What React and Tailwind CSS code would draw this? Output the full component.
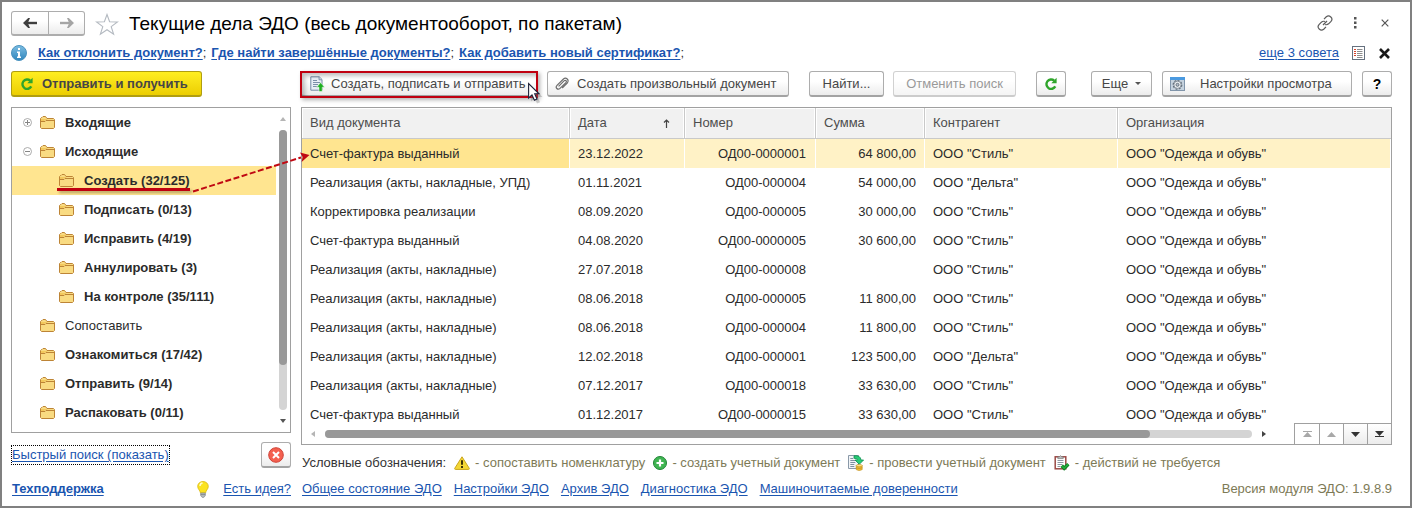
import React from "react";

const BTN =
  "flex h-[26px] items-center rounded-[3px] border border-[#adadad] border-b-2 border-b-[#a3a3a3] bg-linear-to-b from-white from-40% to-[#ececec] text-[#464646] whitespace-nowrap";
const LINK = "text-[#1a55b0] underline underline-offset-2 whitespace-nowrap";

const tree = [
  { label: "Входящие", bold: true, toggle: "plus" },
  {
    label: "Исходящие",
    bold: true,
    toggle: "minus",
    children: [
      { label: "Создать (32/125)", bold: true, selected: true },
      { label: "Подписать (0/13)", bold: true },
      { label: "Исправить (4/19)", bold: true },
      { label: "Аннулировать (3)", bold: true },
      { label: "На контроле (35/111)", bold: true },
    ],
  },
  { label: "Сопоставить" },
  { label: "Ознакомиться (17/42)", bold: true },
  { label: "Отправить (9/14)", bold: true },
  { label: "Распаковать (0/11)", bold: true },
];

const rows = [
  ["Счет-фактура выданный", "23.12.2022", "ОД00-0000001", "64 800,00", 'ООО "Стиль"'],
  ["Реализация (акты, накладные, УПД)", "01.11.2021", "ОД00-000004", "54 000,00", 'ООО "Дельта"'],
  ["Корректировка реализации", "08.09.2020", "ОД00-000005", "30 000,00", 'ООО "Стиль"'],
  ["Счет-фактура выданный", "04.08.2020", "ОД00-0000005", "30 600,00", 'ООО "Стиль"'],
  ["Реализация (акты, накладные)", "27.07.2018", "ОД00-000008", "", 'ООО "Стиль"'],
  ["Реализация (акты, накладные)", "08.06.2018", "ОД00-000005", "11 800,00", 'ООО "Стиль"'],
  ["Реализация (акты, накладные)", "08.06.2018", "ОД00-000004", "11 800,00", 'ООО "Стиль"'],
  ["Реализация (акты, накладные)", "12.02.2018", "ОД00-000001", "123 500,00", 'ООО "Дельта"'],
  ["Реализация (акты, накладные)", "07.12.2017", "ОД00-000018", "33 630,00", 'ООО "Стиль"'],
  ["Счет-фактура выданный", "01.12.2017", "ОД00-0000015", "33 630,00", 'ООО "Стиль"'],
];

function ArrowIcon({ flip, color }) {
  return (
    <svg width="14" height="10" viewBox="0 0 14 10" className={flip ? "rotate-180" : ""}>
      <path d="M3 5h11" stroke={color} strokeWidth="2.400" />
      <path d="M0 5L5.200 0H7L4.800 5L7 10H5.200z" fill={color} />
    </svg>
  );
}

function StarIcon() {
  return (
    <svg width="24" height="23" viewBox="0 0 24 23">
      <path
        d="M12 1.5l2.600 7.200 7.900.2-6.300 4.700 2.400 7.600L12 16.700l-6.600 4.500 2.400-7.600L1.500 8.900l7.900-.2z"
        fill="#fff"
        stroke="#b3b9c0"
        strokeWidth="1.100"
      />
    </svg>
  );
}

function InfoIcon() {
  return (
    <svg width="16" height="16" viewBox="0 0 16 16">
      <defs>
        <linearGradient id="info" x1="0" y1="0" x2="0" y2="1">
          <stop offset="0" stopColor="#7dbde2" />
          <stop offset="1" stopColor="#2f86bd" />
        </linearGradient>
      </defs>
      <circle cx="8" cy="8" r="7.500" fill="url(#info)" stroke="#4b93bf" strokeWidth="1" />
      <path d="M7 3h2v2H7zM6 6.500h3v5h1V13H6v-1.500h1V8H6z" fill="#fff" />
    </svg>
  );
}

function RefreshIcon() {
  return (
    <svg width="14" height="14" viewBox="0 0 14 14">
      <path d="M10.200 3.600A4.700 4.700 0 1 0 11.300 9.400" fill="none" stroke="#2fa52b" strokeWidth="2.400" />
      <path d="M12.600 0.800V6.200H7.300z" fill="#2fa52b" />
    </svg>
  );
}

function FolderIcon() {
  return (
    <svg width="15" height="13" viewBox="0 0 15 13">
      <path
        d="M.5 11.500V2.500L1.500 1.500H2L3 .5H5.500L7 2.500H13.500L14.500 3.500V11.500L13.500 12.500H1.500z"
        fill="#f9db82"
        stroke="#bd8436"
      />
      <path d="M1 5.500H5L6 4.500H14" fill="none" stroke="#bd8436" />
      <path d="M1 3h6l.5 1H5L4 5H1z" fill="#f2c75c" />
    </svg>
  );
}

function ToggleIcon({ kind }) {
  return (
    <svg width="9" height="9" viewBox="0 0 9 9">
      <circle cx="4.500" cy="4.500" r="4" fill="#fff" stroke="#a0a0a0" strokeWidth=".9" />
      <path d={kind === "plus" ? "M2 4.500h5M4.500 2v5" : "M2 4.500h5"} stroke="#858585" />
    </svg>
  );
}

function DocUpIcon() {
  return (
    <svg width="15" height="16" viewBox="0 0 15 16">
      <path d="M.8.8H9.200L12 3.500V14.200H.8z" fill="#e9eff6" stroke="#7389a4" />
      <path d="M9 .8V3.800H12" fill="#cfd9e4" stroke="#7389a4" strokeWidth=".8" />
      <path d="M3 4.500h4M3 6.500h7M3 8.500h5M3 10.500h4" stroke="#7d90a9" />
      <path d="M10.600 6.600L14.600 11.200H12.200V15.500H9V11.200H6.600z" fill="#1fae22" stroke="#fff" strokeWidth=".5" />
    </svg>
  );
}

function ClipIcon() {
  return (
    <svg width="14" height="14" viewBox="0 0 14 14">
      <path
        d="M3.600 9.300L9 3.900Q10.200 2.900 11 3.700T10.900 5.700L5 11.400Q3.200 12.900 1.800 11.500T2 8.300L8.200 2.200Q10.400.3 12.200 2T12.200 6.100L7.200 11"
        fill="none"
        stroke="#6c6c6c"
        strokeWidth="1.200"
      />
    </svg>
  );
}

function SettingsIcon() {
  return (
    <svg width="15" height="14" viewBox="0 0 15 14">
      <rect x=".5" y=".5" width="14" height="13" fill="#c5d2de" stroke="#8195aa" />
      <rect x="0" y="0" width="15" height="3" fill="#4b9ae0" />
      <circle cx="7.500" cy="7.800" r="4.300" fill="none" stroke="#5e6a76" strokeWidth="1.200" strokeDasharray="2 1.300" />
      <circle cx="7.500" cy="7.800" r="3.600" fill="#edf0f3" stroke="#77828d" strokeWidth=".8" />
      <circle cx="7.500" cy="7.800" r="1.500" fill="#b5bfca" stroke="#5e6a76" strokeWidth=".9" />
    </svg>
  );
}

function ChainIcon() {
  return (
    <svg width="16" height="16" viewBox="0 0 16 16" fill="none" stroke="#5c5c5c" strokeWidth="1.200">
      <path d="M7 4.200L9.300 1.800Q11.600 0 13.800 2T14 6.400L11.600 8.800Q10 10.200 8 9.500" />
      <path d="M9 11.800L6.700 14.200Q4.400 16 2.200 14T2 9.600L4.400 7.200Q6 5.800 8 6.500" />
      <path d="M6 10L10 6" />
    </svg>
  );
}

function ListIcon() {
  return (
    <svg width="13" height="14" viewBox="0 0 13 14">
      <rect x=".5" y=".5" width="12" height="13" fill="#fff" stroke="#66717f" />
      <path d="M2 3.500h2M2 5.500h2M2 7.500h2M2 9.500h2" stroke="#d8432c" />
      <path d="M5 3.500h5.500M5 5.500h5.500M5 7.500h5.500M5 9.500h5.500M5 11.500h5.500" stroke="#8d8d8d" />
    </svg>
  );
}

function CloseRoundIcon() {
  return (
    <svg width="16" height="16" viewBox="0 0 16 16">
      <circle cx="8" cy="8" r="7.300" fill="#f4604f" stroke="#cf4338" />
      <path d="M5 5l6 6M11 5l-6 6" stroke="#fff" strokeWidth="2" />
    </svg>
  );
}

function BulbIcon() {
  return (
    <svg width="12" height="17" viewBox="0 0 12 17">
      <path d="M6 .5C2.900.5.7 2.700.7 5.500C.7 8 3 9.200 3.500 12h5C9 9.200 11.300 8 11.300 5.500C11.300 2.700 9.100.5 6 .5z" fill="#fbe321" stroke="#d9b913" strokeWidth=".8" />
      <path d="M3 5Q3 2.300 5.600 2" fill="none" stroke="#fffbd0" strokeWidth="1.400" />
      <path d="M3.700 12h4.600v2.500L7 16.300H5L3.700 14.500z" fill="#b9bdc0" stroke="#858a8e" strokeWidth=".7" />
      <path d="M3.700 13.600h4.600" stroke="#73787c" strokeWidth=".7" />
    </svg>
  );
}

function WarnIcon() {
  return (
    <svg width="16" height="14" viewBox="0 0 16 14">
      <path d="M8 .8L15.300 12.400Q15.500 13.400 14.500 13.400H1.500Q.5 13.400 .7 12.400z" fill="#f4d736" stroke="#c9a51c" strokeLinejoin="round" />
      <path d="M7 4.200h2v4.600H7zM7 10h2v2H7z" fill="#3c3208" />
    </svg>
  );
}

function PlusRoundIcon() {
  return (
    <svg width="14" height="14" viewBox="0 0 14 14">
      <circle cx="7" cy="7" r="6.500" fill="#3fb552" stroke="#208436" />
      <path d="M3.500 7h7M7 3.500v7" stroke="#fff" strokeWidth="2.200" />
    </svg>
  );
}

function PostDocIcon() {
  return (
    <svg width="16" height="16" viewBox="0 0 16 16">
      <path d="M.5.500H10.500V13.500H.5z" fill="#f1f4f7" stroke="#8a99a8" />
      <path d="M2.300 3.500h3M2.300 5.500h5M2.300 7.500h5M2.300 9.500h4M2.300 11.500h4" stroke="#7f8fa0" />
      <path d="M6 .800Q12.500 0 13 5H15.600L11.300 9.300L7 5H9.500Q9.500 3.300 6 3.200z" fill="#27cc75" stroke="#0c9050" strokeWidth=".8" />
      <path d="M8.200 10.500V14.600Q11.200 16.600 14.200 14.600V10.500z" fill="#efbd34" stroke="#c08d18" strokeWidth=".6" />
      <ellipse cx="11.200" cy="10.600" rx="3" ry="1.200" fill="#fbe08a" stroke="#c08d18" strokeWidth=".6" />
      <path d="M8.200 12.700Q11.200 14.400 14.200 12.700" fill="none" stroke="#c08d18" strokeWidth=".7" />
    </svg>
  );
}

function CheckClipIcon() {
  return (
    <svg width="16" height="16" viewBox="0 0 16 16">
      <rect x="1.200" y="1.800" width="10.600" height="12" fill="#fff" stroke="#9b4a45" strokeWidth="1.500" />
      <path d="M3.800 3.600V1.800H5.200Q6.500-.4 7.800 1.800H9.200V3.600z" fill="#bdbdbd" stroke="#777" strokeWidth=".7" />
      <path d="M3.500 5.500h6M3.500 7.500h6M3.500 9.500h5M3.500 11.500h3" stroke="#8e96a0" />
      <path d="M7.800 10.800L10.200 13.300L14.300 9.200" fill="none" stroke="#0e7c22" strokeWidth="3.400" />
      <path d="M7.800 10.800L10.200 13.300L14.300 9.200" fill="none" stroke="#22ad3a" strokeWidth="1.800" />
    </svg>
  );
}

function Cursor() {
  return (
    <svg width="20" height="26" viewBox="0 0 20 26" className="pointer-events-none absolute -right-[10px] top-[10px]">
      <path d="M4 4V19.500L7.600 16.200L10 21.500L13 20.200L10.700 15H15.500z" fill="#777" opacity=".35" />
      <path d="M1.600 1.500V16L5 12.900L7.400 18.200L10 17L7.700 11.800H12z" fill="#fff" stroke="#1c2038" strokeWidth="1.100" />
    </svg>
  );
}

function Pointer() {
  return (
    <svg width="126" height="52" viewBox="0 0 126 52" className="pointer-events-none absolute left-[178px] -top-[18px] z-10">
      <path d="M3 43.500L111 9.500" stroke="#c00812" strokeWidth="2" strokeDasharray="6 2.500" />
      <path d="M119.500 7L110 4.500L112.600 9L111.600 14z" fill="#c00812" />
    </svg>
  );
}

function TreeRow({ node, level }) {
  return (
    <li>
      <button
        type="button"
        className={`relative flex h-[29px] w-full items-center gap-[10px] text-left ${level ? "pl-[47px]" : "pl-[28px]"} ${
          node.selected ? "bg-[#ffe590]" : ""
        }`}
      >
        {node.toggle && (
          <span className="absolute left-[11px]">
            <ToggleIcon kind={node.toggle} />
          </span>
        )}
        <FolderIcon />
        <span className={node.bold ? "font-bold" : ""}>{node.label}</span>
        {node.selected && (
          <>
            <span className="absolute bottom-[4px] left-[45px] h-[3px] w-[133px] bg-[#c00010] shadow-[2px_2px_3px_rgba(0,0,0,0.3)]" />
            <Pointer />
          </>
        )}
      </button>
      {node.children && (
        <ul>
          {node.children.map((c) => (
            <TreeRow key={c.label} node={c} level={1} />
          ))}
        </ul>
      )}
    </li>
  );
}

function Tri({ d, fill, w = 7, h = 5 }) {
  return (
    <svg width={w} height={h} viewBox={`0 0 ${w} ${h}`}>
      <path d={d} fill={fill} />
    </svg>
  );
}

function Header() {
  return (
    <header className="flex h-[34px] items-end gap-[10px] pr-[3px]">
      <div className="flex h-[25px] shrink-0">
        <button type="button" aria-label="Назад" className="flex w-[38px] items-center justify-center rounded-l-[3px] border border-[#adadad] border-b-2 bg-linear-to-b from-white from-40% to-[#ececec]">
          <ArrowIcon color="#3f3f3f" />
        </button>
        <button type="button" aria-label="Вперед" className="flex w-[36px] items-center justify-center rounded-r-[3px] border border-l-0 border-[#adadad] border-b-2 bg-linear-to-b from-white from-40% to-[#ececec]">
          <ArrowIcon flip color="#a5a5a5" />
        </button>
      </div>
      <button type="button" aria-label="Избранное">
        <StarIcon />
      </button>
      <h1 className="text-[19px] leading-[24px] text-black whitespace-nowrap">
        Текущие дела ЭДО (весь документооборот, по пакетам)
      </h1>
      <div className="mb-[5px] ml-auto flex items-center">
        <button type="button" aria-label="Ссылка">
          <ChainIcon />
        </button>
        <button type="button" aria-label="Меню" className="ml-[20px]">
          <svg width="4" height="12" viewBox="0 0 4 12" fill="#555">
            <rect x="1" y="0" width="2.500" height="2.500" />
            <rect x="1" y="4.500" width="2.500" height="2.500" />
            <rect x="1" y="9" width="2.500" height="2.500" />
          </svg>
        </button>
        <button type="button" aria-label="Закрыть" className="ml-[24px]">
          <svg width="8" height="8" viewBox="0 0 8 8">
            <path d="M.7.700l6.600 6.600M7.300.700L.7 7.300" stroke="#555" strokeWidth="1.200" />
          </svg>
        </button>
      </div>
    </header>
  );
}

function Tips() {
  return (
    <div className="mt-[7px] flex h-[20px] items-center pr-[2px] text-[#333]">
      <InfoIcon />
      <p className="ml-[11px] flex gap-[5px] whitespace-nowrap">
        <span>
          <a href="#decline" className={`${LINK} font-bold`}>Как отклонить документ?</a>;
        </span>
        <span>
          <a href="#done" className={`${LINK} font-bold`}>Где найти завершённые документы?</a>;
        </span>
        <span>
          <a href="#cert" className={`${LINK} font-bold`}>Как добавить новый сертификат?</a>;
        </span>
      </p>
      <a href="#tips" className={`${LINK} ml-auto`}>еще 3 совета</a>
      <button type="button" aria-label="Список советов" className="ml-[13px]">
        <ListIcon />
      </button>
      <button type="button" aria-label="Скрыть советы" className="ml-[14px]">
        <svg width="11" height="11" viewBox="0 0 11 11">
          <path d="M1 1l9 9M10 1l-9 9" stroke="#1a1a1a" strokeWidth="2.600" />
        </svg>
      </button>
    </div>
  );
}

function Toolbar() {
  return (
    <div className="flex">
      <button type="button" className={`${BTN} relative w-[237px] gap-[6px] pl-[8px]`}>
        <DocUpIcon />
        Создать, подписать и отправить
        <span className="pointer-events-none absolute -left-[2px] -right-[1px] -top-px -bottom-[3px] border-2 border-[#c00010] shadow-[inset_3px_3px_4px_rgba(0,0,0,0.25),2px_2px_4px_rgba(0,0,0,0.3)]" />
        <Cursor />
      </button>
      <button type="button" className={`${BTN} ml-[9px] w-[242px] gap-[8px] pl-[7px]`}>
        <ClipIcon />
        Создать произвольный документ
      </button>
      <button type="button" className={`${BTN} ml-[20px] w-[75px] justify-center`}>Найти...</button>
      <button type="button" disabled className={`${BTN} ml-[9px] w-[123px] justify-center opacity-55`}>
        Отменить поиск
      </button>
      <button type="button" aria-label="Обновить" className={`${BTN} ml-[20px] w-[30px] justify-center`}>
        <RefreshIcon />
      </button>
      <button type="button" className={`${BTN} ml-auto w-[61px] justify-center gap-[7px]`}>
        Еще
        <Tri d="M0 0h6L3 3z" w={6} h={3} fill="#555" />
      </button>
      <button type="button" className={`${BTN} ml-[10px] w-[190px] gap-[15px] pl-[7px]`}>
        <SettingsIcon />
        Настройки просмотра
      </button>
      <button type="button" aria-label="Справка" className={`${BTN} ml-[10px] w-[30px] justify-center text-[14px] font-bold text-black`}>
        ?
      </button>
    </div>
  );
}

function DocTable() {
  const th = "border-r border-[#c9c9c9] pl-[8px] text-left font-normal shadow-[inset_1px_1px_0_#fff,inset_-1px_0_0_#fff]";
  return (
    <section className="mt-[10px] flex grow flex-col border border-[#a0a0a0]">
      <table className="w-full table-fixed border-separate border-spacing-0 text-[#2b2b2b]">
        <colgroup>
          <col className="w-[268px]" />
          <col className="w-[115px]" />
          <col className="w-[131px]" />
          <col className="w-[109px]" />
          <col className="w-[193px]" />
          <col />
        </colgroup>
        <thead>
          <tr className="h-[31px] bg-[#f1f1f1] text-[#4d4d4d] [&>th]:border-b [&>th]:border-b-[#c9c9c9]">
            <th className={th}>Вид документа</th>
            <th className={th}>
              <span className="flex items-center justify-between pr-[14px]">
                Дата
                <svg width="7" height="9" viewBox="0 0 7 9">
                  <path d="M3.500 9V1M1 3.500L3.500 1L6 3.500" fill="none" stroke="#444" strokeWidth="1.200" />
                </svg>
              </span>
            </th>
            <th className={th}>Номер</th>
            <th className={th}>Сумма</th>
            <th className={th}>Контрагент</th>
            <th className="pl-[8px] text-left font-normal shadow-[inset_1px_1px_0_#fff]">Организация</th>
          </tr>
        </thead>
        <tbody>
          {rows.map((r, i) => (
            <tr
              key={i}
              className={`h-[29px] [&>td]:whitespace-nowrap [&>td]:border-r [&>td]:border-white [&>td]:pl-[8px] ${
                i === 0 ? "bg-[#fff2c6]" : ""
              }`}
            >
              <td className={i === 0 ? "bg-[#ffe590]" : ""}>{r[0]}</td>
              <td>{r[1]}</td>
              <td className="pr-[9px] text-right">{r[2]}</td>
              <td className="pr-[8px] text-right">{r[3]}</td>
              <td>{r[4]}</td>
              <td>ООО "Одежда и обувь"</td>
            </tr>
          ))}
        </tbody>
      </table>
      <div className="flex grow">
        <div className="flex h-[9px] grow items-center gap-[10px] pl-[9px] pr-[28px]">
          <Tri d="M4 0v6L0 3z" w={4} h={6} fill="#b5b5b5" />
          <div className="h-[8px] grow rounded-full bg-[#d4d4d4]">
            <div className="h-full w-[89%] rounded-full bg-[#999]" />
          </div>
          <Tri d="M0 0v6L4 3z" w={4} h={6} fill="#444" />
        </div>
        <div className="-mb-px -mr-px -mt-[6px] flex h-[22px] border border-[#a0a0a0] bg-white *:flex *:w-[24px] *:items-center *:justify-center">
          <button type="button" aria-label="В начало">
            <Tri d="M0 0h9v1H0zM4.500 1L9 6H0z" w={9} h={6} fill="#a8a8a8" />
          </button>
          <button type="button" aria-label="Вверх" className="border-l border-[#a0a0a0]">
            <Tri d="M4.500 0L9 5H0z" w={9} h={5} fill="#a8a8a8" />
          </button>
          <button type="button" aria-label="Вниз" className="border-l border-[#a0a0a0] bg-linear-to-b from-white to-[#ececec]">
            <Tri d="M0 0h9L4.500 5z" w={9} h={5} fill="#333" />
          </button>
          <button type="button" aria-label="В конец" className="border-l border-[#a0a0a0] bg-linear-to-b from-white to-[#ececec]">
            <Tri d="M0 0h9L4.500 5zM0 5h9v1H0z" w={9} h={6} fill="#333" />
          </button>
        </div>
      </div>
    </section>
  );
}

function Legend() {
  const items = [
    [WarnIcon, "сопоставить номенклатуру"],
    [PlusRoundIcon, "создать учетный документ"],
    [PostDocIcon, "провести учетный документ"],
    [CheckClipIcon, "действий не требуется"],
  ];
  return (
    <div className="mt-[9px] flex h-[18px] items-center whitespace-nowrap pl-px text-[#333]">
      Условные обозначения:
      {items.map(([Icon, text]) => (
        <span key={text} className="flex items-center gap-[5px] pl-[8px] text-[#7d7a56]">
          <Icon />- {text}
        </span>
      ))}
    </div>
  );
}

export default function App() {
  return (
    <div className="flex min-h-screen flex-col border-2 border-[#808080] bg-white pl-[9px] pr-[18px] font-['Liberation_Sans',Arial,sans-serif] text-[13px] leading-[18px] text-[#2b2b2b]">
      <Header />
      <Tips />
      <main className="mt-[8px] grid grid-cols-[280px_minmax(0,1fr)] gap-x-[10px]">
        <aside className="flex flex-col">
          <button
            type="button"
            className="flex h-[26px] w-[191px] items-center gap-[8px] rounded-[3px] border border-b-2 border-[#b09e10] bg-linear-to-b from-[#ffee20] to-[#ecce00] pl-[8px] font-bold text-[#464646]"
          >
            <RefreshIcon />
            Отправить и получить
          </button>
          <nav className="mt-[10px] flex h-[326px] border border-[#a0a0a0]">
            <ul className="grow">
              {tree.map((n) => (
                <TreeRow key={n.label} node={n} level={0} />
              ))}
            </ul>
            <div className="flex w-[14px] flex-col items-center gap-[9px] py-[9px]">
              <Tri d="M3 0L6 4H0z" w={6} h={4} fill="#b5b5b5" />
              <div className="w-[8px] grow rounded-full bg-[#d4d4d4]">
                <div className="h-[84%] rounded-full bg-[#999]" />
              </div>
              <Tri d="M0 0h6L3 4z" w={6} h={4} fill="#555" />
            </div>
          </nav>
          <div className="mt-[9px] flex items-center justify-between pl-px">
            <a href="#search" className={`${LINK} outline-1 outline-dotted outline-black`}>Быстрый поиск (показать)</a>
            <button type="button" aria-label="Очистить" className={`${BTN} w-[30px] justify-center`}>
              <CloseRoundIcon />
            </button>
          </div>
        </aside>
        <div className="flex min-w-0 flex-col">
          <Toolbar />
          <DocTable />
          <Legend />
        </div>
      </main>
      <footer className="mt-[8px] grid grid-cols-[280px_minmax(0,1fr)] items-center gap-x-[10px] pb-[8px]">
        <div className="flex items-center pl-px">
          <a href="#support" className={`${LINK} font-bold`}>Техподдержка</a>
          <span className="ml-auto mr-[14px]">
            <BulbIcon />
          </span>
          <a href="#idea" className={LINK}>Есть идея?</a>
        </div>
        <div className="flex gap-[12px] pl-px">
          <a href="#state" className={LINK}>Общее состояние ЭДО</a>
          <a href="#settings" className={LINK}>Настройки ЭДО</a>
          <a href="#archive" className={LINK}>Архив ЭДО</a>
          <a href="#diag" className={LINK}>Диагностика ЭДО</a>
          <a href="#mchd" className={LINK}>Машиночитаемые доверенности</a>
          <span className="ml-auto whitespace-nowrap text-[#7d7a56]">Версия модуля ЭДО: 1.9.8.9</span>
        </div>
      </footer>
    </div>
  );
}
